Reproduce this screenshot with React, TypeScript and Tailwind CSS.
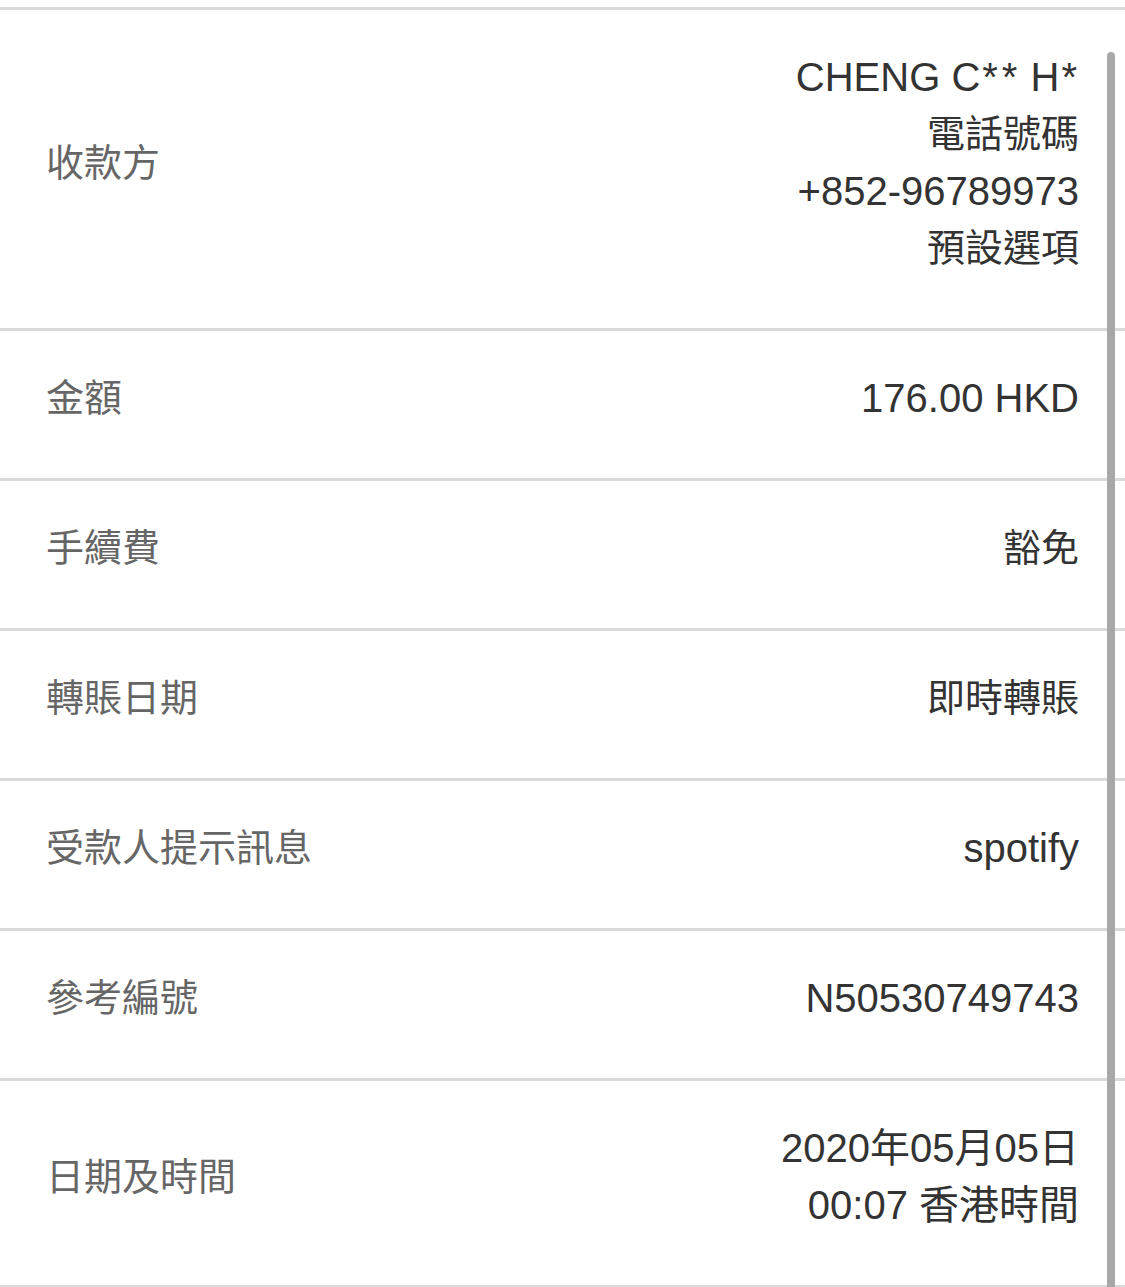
const rows: { label: string; value: string[] }[] = [
  { label: "收款方", value: ["CHENG C** H*", "電話號碼", "+852-96789973", "預設選項"] },
  { label: "金額", value: ["176.00 HKD"] },
  { label: "手續費", value: ["豁免"] },
  { label: "轉賬日期", value: ["即時轉賬"] },
  { label: "受款人提示訊息", value: ["spotify"] },
  { label: "參考編號", value: ["N50530749743"] },
  { label: "日期及時間", value: ["2020年05月05日", "00:07 香港時間"] },
];

// CJK-only lines are set a touch smaller than latin ones, as on the phone
const isCjk = (s: string) => /^[\u3400-\u9fff]+$/.test(s);

// masked names: the phone spaces the asterisks out a little
function Masked({ text }: { text: string }) {
  const parts = text.split("*");
  return (
    <>
      {parts.map((part, i) => (
        <span key={i}>
          {part}
          {i < parts.length - 1 && <span className="mx-[2px]">*</span>}
        </span>
      ))}
    </>
  );
}

export default function App() {
  return (
    <div
      className="relative min-h-[1287px] w-[1125px] overflow-hidden bg-white pt-[7px]"
      style={{ fontFamily: '"Liberation Sans", "Noto Sans CJK TC", sans-serif' }}
    >
      <div className="flex flex-col border-b-[3px] border-[#d9d9d9]">
        {rows.map((row) => (
          <div
            key={row.label}
            className="flex items-center justify-between border-t-[3px] border-[#d9d9d9] pb-[51px] pl-[46px] pr-[46px] pt-[39px]"
          >
            <span className="h-[57px] text-[38px] leading-[57px] text-[#666666]">{row.label}</span>
            <div className="flex flex-col items-end text-right text-[#333333]">
              {row.value.map((v) => (
                <span
                  key={v}
                  className={`block h-[57px] leading-[57px] ${isCjk(v) ? "text-[38px]" : "text-[40px]"}`}
                >
                  {v.includes("*") ? <Masked text={v} /> : v}
                </span>
              ))}
            </div>
          </div>
        ))}
      </div>
      <div className="absolute bottom-0 left-[1107px] top-[52px] w-[8px] rounded-t-full bg-[#a8a8a8]" />
    </div>
  );
}
